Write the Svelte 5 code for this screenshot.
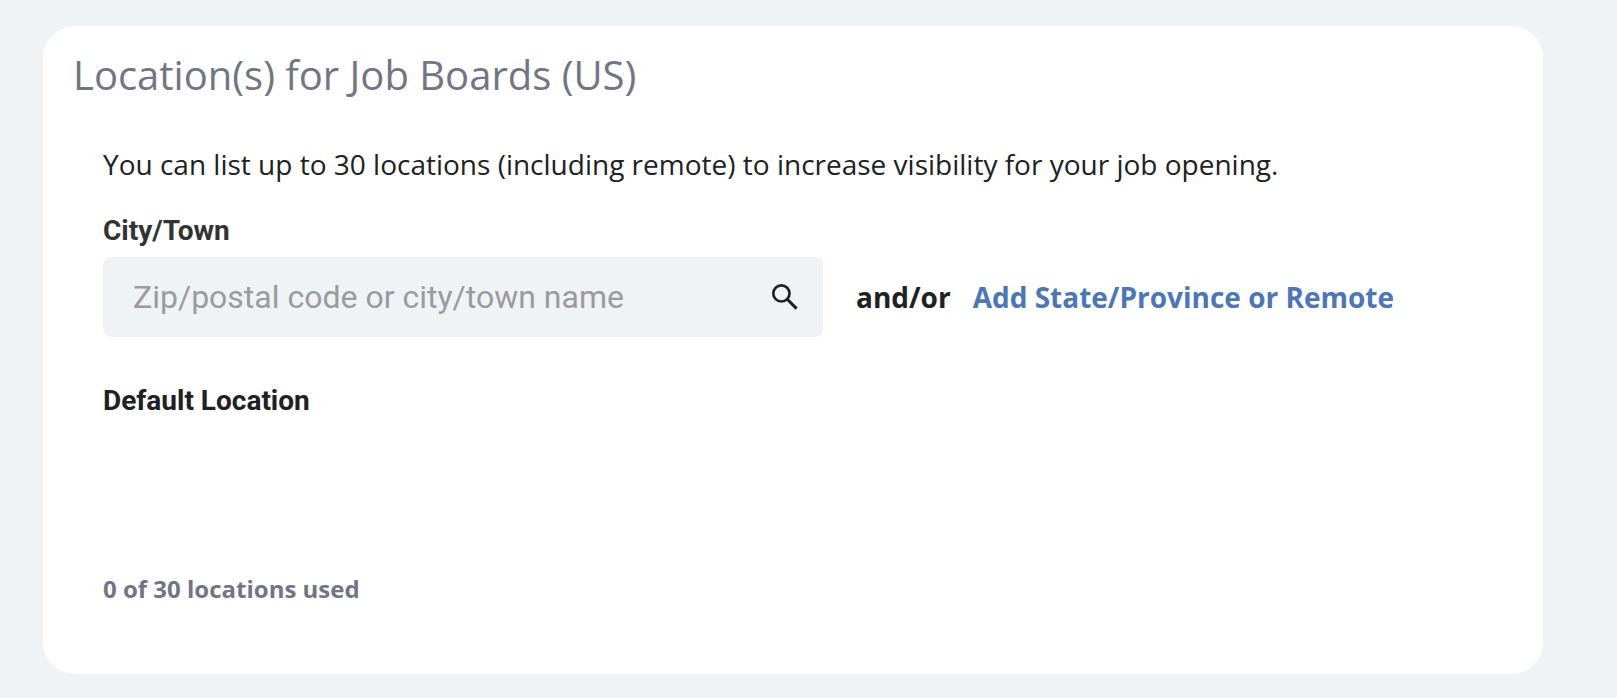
<script lang="ts">
    let maxLocations = 30;
    let locations: string[] = [];
    let search = "";
</script>

<style>
    :global(body) {
        background-color: #eff3f6;
    }

    .card {
        margin: 26px 74px 24px 43px;
        padding: 24px 30px 69px;
        background-color: white;
        border-radius: 32px;
        font-family: "Open Sans", sans-serif;
        color: #202124;
    }

    h2 {
        margin: 0;
        font-size: 40px;
        line-height: 50px;
        font-weight: 400;
        color: #717585;
    }

    .content {
        padding: 44px 30px 0;
    }

    .hint {
        margin: 0;
        font-size: 28px;
        line-height: 40px;
    }

    .field-label {
        display: block;
        margin-top: 27px;
        font-family: Roboto, sans-serif;
        font-size: 28px;
        line-height: 40px;
        font-weight: 700;
        color: #333;
    }

    .row {
        display: flex;
        align-items: center;
        margin-top: 6px;
        font-size: 28px;
        font-weight: 700;
    }

    .search {
        display: flex;
        align-items: center;
        flex: 0 1 720px;
        height: 80px;
        border-radius: 8px;
        background-color: #eff3f6;
    }

    .search input {
        flex: 1;
        min-width: 0;
        padding: 0 0 0 30px;
        border: none;
        outline: none;
        background: none;
        font-family: Roboto, sans-serif;
        font-size: 32px;
        color: #333;
    }

    .search input::placeholder {
        color: #999b9e;
    }

    .search button {
        display: flex;
        padding: 0;
        margin-right: 20px;
        border: none;
        background: none;
        color: #202124;
    }

    .and-or {
        margin: 0 22px 0 33px;
    }

    a {
        color: #4d76b5;
        text-decoration: none;
    }

    h3 {
        margin: 44px 0 0;
        font-family: Roboto, sans-serif;
        font-size: 28px;
        line-height: 40px;
        font-weight: 700;
    }

    .locations {
        min-height: 152px;
        margin: 0;
        padding: 0;
        list-style: none;
    }

    .used {
        margin: 0;
        font-size: 24px;
        line-height: 32px;
        font-weight: 700;
        color: #717585;
    }
</style>

<main class="card">
    <h2>Location(s) for Job Boards (US)</h2>
    <div class="content">
        <p class="hint">You can list up to {maxLocations} locations (including remote) to increase visibility for your job opening.</p>
        <label class="field-label" for="city">City/Town</label>
        <div class="row">
            <div class="search">
                <input id="city" type="text" placeholder="Zip/postal code or city/town name" bind:value={search}>
                <button type="button" aria-label="Search">
                    <svg width="36" height="36" viewBox="0 0 36 36" fill="none" stroke="currentColor">
                        <circle cx="14.4" cy="14.4" r="8.1" stroke-width="2.7"/>
                        <path d="M20 20L29.600 29.600" stroke-width="3.1"/>
                    </svg>
                </button>
            </div>
            <span class="and-or">and/or</span>
            <a href="#add-state">Add State/Province or Remote</a>
        </div>
        <h3>Default Location</h3>
        <ul class="locations">
            {#each locations as location}
                <li>{location}</li>
            {/each}
        </ul>
        <p class="used">{locations.length} of {maxLocations} locations used</p>
    </div>
</main>
